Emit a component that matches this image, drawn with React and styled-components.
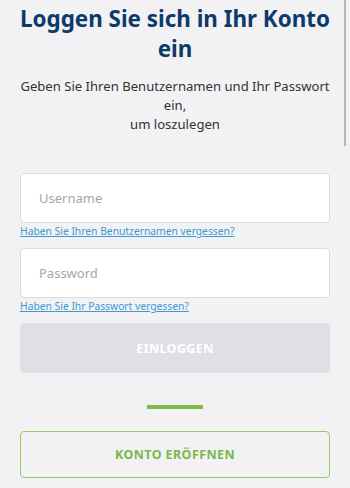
import React from 'react';
import styled, { createGlobalStyle } from 'styled-components';

const GlobalStyle = createGlobalStyle`
  html, body {
    margin: 0;
    padding: 0;
    background: #f2f2f4;
    font-family: "Noto Sans", "Open Sans", sans-serif;
  }
`;

const Page = styled.div`
  position: relative;
  width: 350px;
  height: 488px;
  overflow: hidden;
  background: #f2f2f4;
`;

const Content = styled.div`
  display: flex;
  flex-direction: column;
  padding: 4px 20px 0;
`;

const Title = styled.h1`
  margin: 0 -4px;
  font-size: 22.4px;
  line-height: 30px;
  font-weight: 700;
  color: #0c3a6a;
  text-align: center;
`;

const Subtitle = styled.p`
  margin: 13px -10px 0;
  font-size: 13.1px;
  line-height: 19px;
  color: #333;
  text-align: center;
  white-space: nowrap;
`;

const Field = styled.div`
  display: flex;
  flex-direction: column;
  margin-top: ${ ( { top } ) => top }px;
`;

const Input = styled.input`
  box-sizing: border-box;
  width: 100%;
  height: 50px;
  padding: 0 18px;
  border: 1px solid #dcdcdc;
  border-radius: 4px;
  background: #fff;
  font-family: inherit;
  font-size: 13px;
  color: #333;
  outline: 0;
  &::placeholder {
    color: #a6a6a6;
  }
`;

const HelpLink = styled.a`
  margin-top: 1px;
  font-size: 10.3px;
  line-height: 14px;
  color: #3a9bd0;
  text-decoration: underline;
  cursor: pointer;
`;

const Button = styled.button`
  box-sizing: border-box;
  height: ${ ( { tall } ) => tall }px;
  width: 100%;
  margin-top: ${ ( { top } ) => top }px;
  border-radius: 4px;
  border: ${ ( { outline } ) => ( outline ? '1.5px solid #93ca63' : '0' ) };
  background: ${ ( { outline } ) => ( outline ? '#f2f2f4' : '#e0e0e4' ) };
  color: ${ ( { outline } ) => ( outline ? '#7cb748' : '#fff' ) };
  font-family: inherit;
  font-size: 12.5px;
  font-weight: 700;
  letter-spacing: 0.4px;
  cursor: pointer;
`;

const Divider = styled.div`
  align-self: center;
  width: 56px;
  height: 4px;
  margin-top: 32px;
  background: #7ebb45;
`;

const ScrollThumb = styled.div`
  position: absolute;
  top: 0;
  right: 4px;
  width: 2px;
  height: 146px;
  background: #b5b5b5;
`;

export default function App () {
  return (
    <Page>
      <GlobalStyle />
      <Content>
        <Title>Loggen Sie sich in Ihr Konto ein</Title>
        <Subtitle>
          Geben Sie Ihren Benutzernamen und Ihr Passwort
          <br />
          ein,
          <br />
          um loszulegen
        </Subtitle>
        <Field top={ 39 }>
          <Input placeholder="Username" />
          <HelpLink>Haben Sie Ihren Benutzernamen vergessen?</HelpLink>
        </Field>
        <Field top={ 10 }>
          <Input type="password" placeholder="Password" />
          <HelpLink>Haben Sie Ihr Passwort vergessen?</HelpLink>
        </Field>
        <Button top={ 10 } tall={ 50 } disabled>EINLOGGEN</Button>
        <Divider />
        <Button top={ 22 } tall={ 47 } outline>KONTO ERÖFFNEN</Button>
      </Content>
      <ScrollThumb />
    </Page>
  );
}
